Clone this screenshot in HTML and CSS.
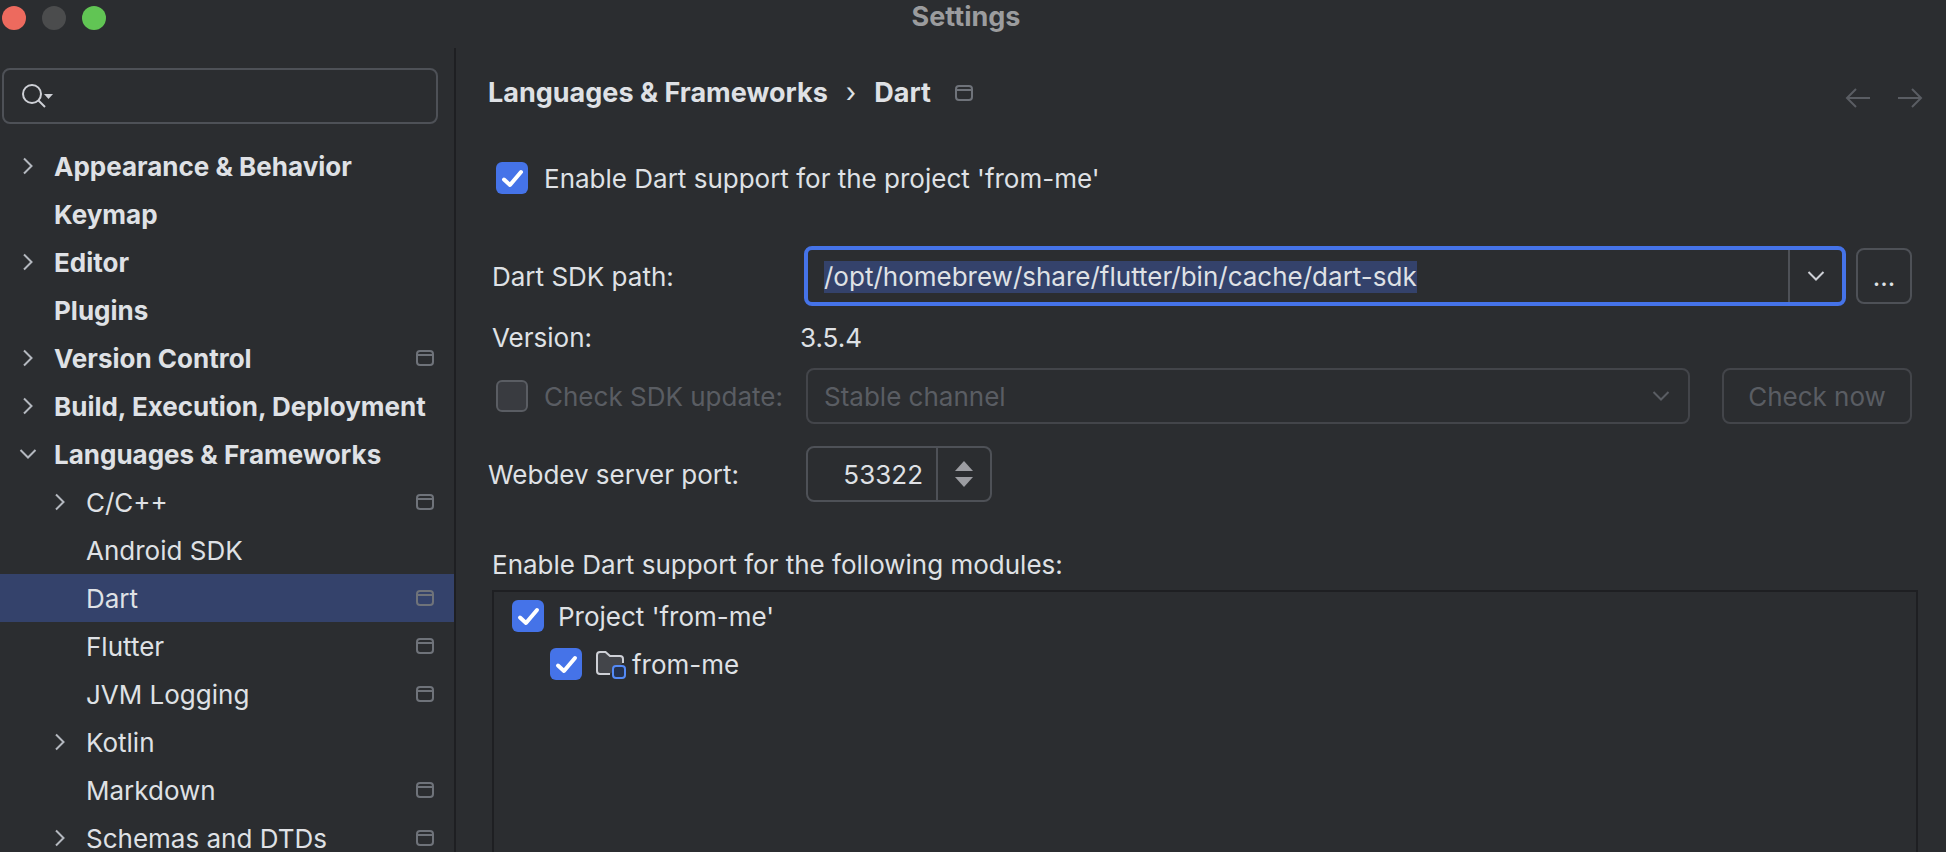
FILE: index.html
```html
<!DOCTYPE html>
<html lang="en">
<head>
    <meta charset="UTF-8">
    <meta name="viewport" content="width=device-width, initial-scale=1.0">
    <title>Settings</title>
    <link rel="stylesheet" href="styles.css">
</head>
<body>
    <!-- Shared icons -->
    <svg class="icon-defs" aria-hidden="true">
        <symbol id="icon-right" viewBox="0 0 16 24">
            <path d="M4 4.500L11.500 12L4 19.500" />
        </symbol>
        <symbol id="icon-down" viewBox="0 0 24 16">
            <path d="M4.500 4L12 11.500L19.500 4" />
        </symbol>
        <symbol id="icon-project" viewBox="0 0 18 16">
            <rect x="1" y="1" width="16" height="14" rx="3" />
            <path d="M1 5H17" />
        </symbol>
    </svg>

    <header class="titlebar">
        <div class="lights">
            <button class="light close" type="button" aria-label="Close"></button>
            <button class="light minimize" type="button" aria-label="Minimize" disabled></button>
            <button class="light zoom" type="button" aria-label="Zoom"></button>
        </div>
        <h1 class="title">Settings</h1>
    </header>

    <div class="window">
        <aside class="sidebar">
            <div class="search">
                <svg class="search-icon" width="34" height="26" viewBox="0 0 34 26" aria-hidden="true">
                    <circle cx="11" cy="11" r="9" />
                    <path d="M17.500 17.500L24 24" />
                    <path class="solid" d="M23 11H32L27.500 16Z" />
                </svg>
                <input class="search-input" type="text" aria-label="Search settings">
            </div>

            <nav class="tree">
                <a class="item group" href="#appearance">
                    <span class="arrow"><svg class="right"><use href="#icon-right" /></svg></span>
                    <span class="name">Appearance &amp; Behavior</span>
                </a>
                <a class="item group" href="#keymap">
                    <span class="arrow"></span>
                    <span class="name">Keymap</span>
                </a>
                <a class="item group" href="#editor">
                    <span class="arrow"><svg class="right"><use href="#icon-right" /></svg></span>
                    <span class="name">Editor</span>
                </a>
                <a class="item group" href="#plugins">
                    <span class="arrow"></span>
                    <span class="name">Plugins</span>
                </a>
                <a class="item group" href="#vcs">
                    <span class="arrow"><svg class="right"><use href="#icon-right" /></svg></span>
                    <span class="name">Version Control</span>
                    <svg class="project"><use href="#icon-project" /></svg>
                </a>
                <a class="item group" href="#build">
                    <span class="arrow"><svg class="right"><use href="#icon-right" /></svg></span>
                    <span class="name">Build, Execution, Deployment</span>
                </a>
                <a class="item group" href="#languages">
                    <span class="arrow"><svg class="down"><use href="#icon-down" /></svg></span>
                    <span class="name">Languages &amp; Frameworks</span>
                </a>
                <a class="item child" href="#cpp">
                    <span class="arrow"><svg class="right"><use href="#icon-right" /></svg></span>
                    <span class="name">C/C++</span>
                    <svg class="project"><use href="#icon-project" /></svg>
                </a>
                <a class="item child" href="#android">
                    <span class="arrow"></span>
                    <span class="name">Android SDK</span>
                </a>
                <a class="item child selected" href="#dart" aria-current="page">
                    <span class="arrow"></span>
                    <span class="name">Dart</span>
                    <svg class="project"><use href="#icon-project" /></svg>
                </a>
                <a class="item child" href="#flutter">
                    <span class="arrow"></span>
                    <span class="name">Flutter</span>
                    <svg class="project"><use href="#icon-project" /></svg>
                </a>
                <a class="item child" href="#jvm">
                    <span class="arrow"></span>
                    <span class="name">JVM Logging</span>
                    <svg class="project"><use href="#icon-project" /></svg>
                </a>
                <a class="item child" href="#kotlin">
                    <span class="arrow"><svg class="right"><use href="#icon-right" /></svg></span>
                    <span class="name">Kotlin</span>
                </a>
                <a class="item child" href="#markdown">
                    <span class="arrow"></span>
                    <span class="name">Markdown</span>
                    <svg class="project"><use href="#icon-project" /></svg>
                </a>
                <a class="item child" href="#schemas">
                    <span class="arrow"><svg class="right"><use href="#icon-right" /></svg></span>
                    <span class="name">Schemas and DTDs</span>
                    <svg class="project"><use href="#icon-project" /></svg>
                </a>
            </nav>
        </aside>

        <main class="content">
            <div class="topline">
                <nav class="breadcrumb" aria-label="Breadcrumb">
                    <a href="#languages">Languages &amp; Frameworks</a>
                    <span class="separator">›</span>
                    <a href="#dart">Dart</a>
                    <svg class="project"><use href="#icon-project" /></svg>
                </nav>
                <div class="history">
                    <button type="button" aria-label="Back" disabled>
                        <svg width="26" height="20" viewBox="0 0 26 20"><path d="M25 10H2M11 1L2 10L11 19" /></svg>
                    </button>
                    <button type="button" aria-label="Forward" disabled>
                        <svg width="26" height="20" viewBox="0 0 26 20"><path d="M1 10H24M15 1L24 10L15 19" /></svg>
                    </button>
                </div>
            </div>

            <form class="settings">
                <label class="check enable">
                    <input type="checkbox" checked>
                    <span>Enable Dart support for the project 'from-me'</span>
                </label>

                <div class="row path-row">
                    <label class="row-label" for="sdk_path">Dart SDK path:</label>
                    <div class="combo">
                        <input type="text" id="sdk_path" value="/opt/homebrew/share/flutter/bin/cache/dart-sdk">
                        <button class="combo-button" type="button" aria-label="Recent paths">
                            <svg class="down"><use href="#icon-down" /></svg>
                        </button>
                    </div>
                    <button class="button browse" type="button">...</button>
                </div>

                <div class="row version-row">
                    <span class="row-label">Version:</span>
                    <output>3.5.4</output>
                </div>

                <div class="row update-row">
                    <label class="check row-label">
                        <input type="checkbox" disabled>
                        <span>Check SDK update:</span>
                    </label>
                    <div class="select">
                        <select aria-label="Update channel" disabled>
                            <option>Stable channel</option>
                        </select>
                        <svg class="down"><use href="#icon-down" /></svg>
                    </div>
                    <button class="button check-now" type="button" disabled>Check now</button>
                </div>

                <div class="row port-row">
                    <label class="row-label" for="port">Webdev server port:</label>
                    <div class="spinner">
                        <input type="text" inputmode="numeric" id="port" value="53322">
                        <div class="steps">
                            <button type="button" aria-label="Increase"><svg width="18" height="10" viewBox="0 0 18 10"><path d="M0 10L9 0L18 10Z" /></svg></button>
                            <button type="button" aria-label="Decrease"><svg width="18" height="10" viewBox="0 0 18 10"><path d="M0 0L9 10L18 0Z" /></svg></button>
                        </div>
                    </div>
                </div>

                <p class="modules-label" id="modules_label">Enable Dart support for the following modules:</p>
                <div class="modules" role="group" aria-labelledby="modules_label">
                    <label class="check module">
                        <input type="checkbox" checked>
                        <span>Project 'from-me'</span>
                    </label>
                    <label class="check module nested">
                        <input type="checkbox" checked>
                        <svg class="folder" width="32" height="30" viewBox="0 0 32 30" aria-hidden="true">
                            <path class="folder-body" d="M16 25H6Q3 25 3 22V6Q3 3 6 3H11.500L16 7H26Q29 7 29 10V14" />
                            <rect class="folder-badge" x="19" y="17" width="12" height="12" rx="3" />
                        </svg>
                        <span>from-me</span>
                    </label>
                </div>
            </form>
        </main>
    </div>

    <script>
        // The path is focused and fully selected when the page opens
        window.onload = function () {
            const path = document.getElementById("sdk_path");
            path.focus();
            path.select();
        };
    </script>
</body>
</html>
```
FILE: styles.css
```css
* {
    box-sizing: border-box;
}

body {
    margin: 0;
    height: 100vh;
    overflow: hidden;
    display: flex;
    flex-direction: column;
    background: #2b2d30;
    color: #dfe1e5;
    font-family: Inter, "Liberation Sans", sans-serif;
    font-size: 26px;
    line-height: 32px;
}

a {
    color: inherit;
    text-decoration: none;
}

button, input, select {
    font: inherit;
    color: inherit;
    margin: 0;
}

svg {
    display: block;
    flex: none;
    fill: none;
    stroke: currentColor;
    stroke-width: 2;
}

.icon-defs {
    position: absolute;
    width: 0;
    height: 0;
}

.right {
    width: 16px;
    height: 24px;
}

.down {
    width: 24px;
    height: 16px;
}

.project {
    width: 18px;
    height: 16px;
    color: #6f737a;
}

/* Title bar */
.titlebar {
    display: grid;
    grid-template-columns: 120px 1fr 120px;
    height: 48px;
    flex: none;
    padding-right: 14px;
}

.lights {
    display: flex;
    gap: 16px;
    padding: 6px 2px;
}

.light {
    width: 24px;
    height: 24px;
    padding: 0;
    border: none;
    border-radius: 50%;
}

.close {
    background: #ed6a5e;
}

.minimize {
    background: #4b4c4d;
}

.zoom {
    background: #61c554;
}

.title {
    margin: 0;
    font-size: 27px;
    line-height: 34px;
    text-align: center;
    color: #9b9c9e;
}

.window {
    display: flex;
    flex: 1;
    min-height: 0;
}

/* Sidebar */
.sidebar {
    width: 456px;
    flex: none;
    overflow: hidden;
    border-right: 2px solid #1e1f22;
    padding-top: 20px;
}

.search {
    display: flex;
    align-items: center;
    gap: 8px;
    height: 56px;
    margin: 0 16px 18px 2px;
    padding: 0 17px;
    border: 2px solid #4e5157;
    border-radius: 8px;
}

.search-icon {
    color: #ced0d6;
}

.solid {
    fill: currentColor;
    stroke: none;
}

.search-input {
    flex: 1;
    min-width: 0;
    border: none;
    outline: none;
    background: transparent;
}

.item {
    display: flex;
    align-items: center;
    height: 48px;
    padding: 0 20px 0 16px;
    white-space: nowrap;
}

.group {
    font-weight: 700;
}

.child {
    padding-left: 48px;
}

.selected {
    background: #34426b;
}

.arrow {
    display: flex;
    justify-content: center;
    width: 24px;
    margin-right: 14px;
    color: #b4b8bf;
}

.name {
    flex: 1;
    padding-top: 2px;
}

/* Content */
.content {
    flex: 1;
    min-width: 0;
    display: flex;
    flex-direction: column;
}

.topline {
    display: flex;
    justify-content: space-between;
    padding: 29px 23px 0 32px;
}

.breadcrumb {
    display: flex;
    align-items: center;
    gap: 18px;
    font-size: 27px;
    font-weight: 700;
}

.breadcrumb .project {
    margin-left: 6px;
}

.separator {
    font-weight: 400;
}

.history {
    display: flex;
    gap: 26px;
    padding-top: 10px;
}

.history button {
    padding: 0;
    border: none;
    background: transparent;
    color: #5a5d63;
}

.settings {
    flex: 1;
    display: flex;
    flex-direction: column;
    padding: 52px 28px 0 36px;
}

.check {
    display: flex;
    align-items: center;
    gap: 16px;
}

.check span, .row-label, .check-now {
    padding-top: 2px;
}

.check input {
    appearance: none;
    width: 32px;
    height: 32px;
    flex: none;
    border-radius: 6px;
    background: #4573e8;
}

.check input:checked {
    background-image: url("data:image/svg+xml,%3Csvg xmlns='http://www.w3.org/2000/svg' viewBox='0 0 32 32' fill='none' stroke='white' stroke-width='4' stroke-linecap='round' stroke-linejoin='round'%3E%3Cpath d='M8 17.500L14 23L25 10'/%3E%3C/svg%3E");
}

.check input:disabled {
    border: 2px solid #5a5d63;
    background: #393b40;
}

.enable {
    padding-left: 4px;
}

.row {
    display: flex;
    align-items: center;
    padding-right: 6px;
}

.row-label {
    width: 314px;
    flex: none;
}

.path-row {
    margin-top: 51px;
}

.combo {
    display: flex;
    flex: 1;
    height: 60px;
    margin-left: -2px;
    border: 4px solid #4573e8;
    border-radius: 8px;
}

.combo input {
    flex: 1;
    min-width: 0;
    padding: 2px 16px 0;
    border: none;
    outline: none;
    background: transparent;
}

.combo input::selection {
    background: #34426b;
    color: #dfe1e5;
}

.combo-button {
    width: 54px;
    display: flex;
    align-items: center;
    justify-content: center;
    padding: 0;
    border: none;
    border-left: 2px solid #4e5157;
    background: transparent;
    color: #ced0d6;
}

.button {
    height: 56px;
    border: 2px solid #4e5157;
    border-radius: 8px;
    background: transparent;
}

.browse {
    width: 56px;
    margin-left: 10px;
    padding: 2px 0 0;
}

.version-row {
    margin-top: 14px;
}

.version-row output {
    margin-left: -6px;
    padding-top: 2px;
}

.update-row {
    margin-top: 14px;
    color: #5a5d63;
}

.update-row .row-label {
    padding: 0 0 0 4px;
}

.select {
    display: grid;
    grid-template-columns: 1fr 54px;
    align-items: center;
    flex: 1;
    height: 56px;
    border: 2px solid #43454a;
    border-radius: 8px;
}

.select select {
    grid-area: 1 / 1 / 2 / 3;
    appearance: none;
    height: 52px;
    padding: 2px 16px 0;
    border: none;
    background: transparent;
    opacity: 1;
}

.select .down {
    grid-area: 1 / 2;
    justify-self: center;
}

.check-now {
    width: 190px;
    margin-left: 32px;
    border-color: #43454a;
}

.port-row {
    margin: 22px 0 0 -4px;
}

.port-row .row-label {
    width: 318px;
}

.spinner {
    display: flex;
    width: 186px;
    height: 56px;
    border: 2px solid #4e5157;
    border-radius: 8px;
}

.spinner input {
    flex: 1;
    min-width: 0;
    padding: 2px 13px 0;
    border: none;
    background: transparent;
    text-align: right;
}

.steps {
    width: 54px;
    display: flex;
    flex-direction: column;
    align-items: center;
    justify-content: center;
    gap: 6px;
    border-left: 2px solid #4e5157;
}

.steps button {
    padding: 0;
    border: none;
    background: transparent;
    color: #9c9da2;
}

.steps svg {
    fill: currentColor;
    stroke: none;
}

.modules-label {
    margin: 47px 0 9px;
}

.modules {
    flex: 1;
    border: 2px solid #1e1f22;
    border-bottom: none;
}

.module {
    gap: 14px;
    height: 48px;
    padding-left: 18px;
}

.nested {
    gap: 6px;
    padding-left: 56px;
}

.folder {
    margin-left: 6px;
}

.folder-body {
    fill: #43454a;
    stroke: #ced0d6;
}

.folder-badge {
    fill: #25324d;
    stroke: #548af7;
}
```
